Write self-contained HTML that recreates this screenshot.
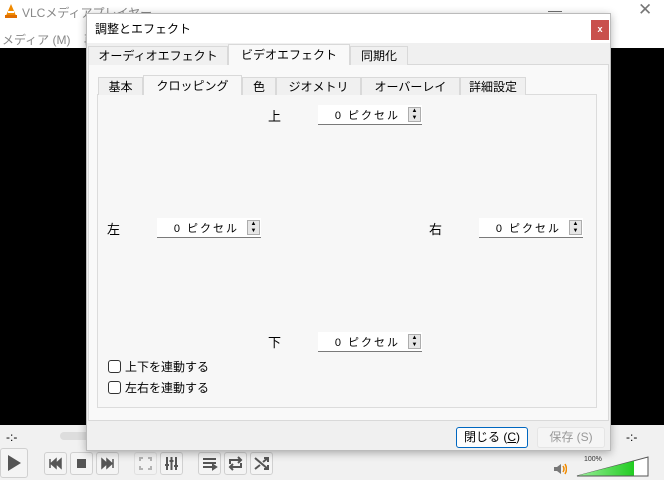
<!DOCTYPE html>
<html><head><meta charset="utf-8"><style>
*{margin:0;padding:0;box-sizing:border-box}
body{width:664px;height:480px;overflow:hidden;position:relative;background:#000;font-family:"Liberation Sans","Noto Sans CJK JP",sans-serif;font-size:12px;color:#000}
.a{position:absolute}
.tab{position:absolute;border:1px solid #d9d9d9;border-bottom:none;background:#f0f0f0;text-align:center;font-size:12px;line-height:18px}
.tab.on{background:#f9f9f9;z-index:2}
.spin{position:absolute;width:104px;height:20px;background:#fff;border-bottom:1px solid #7a7a7a}
.spin span{position:absolute;right:22px;top:2px;font-size:11px;letter-spacing:2px}
.spin i{position:absolute;right:1px;top:2px;width:13px;height:15px;border:1px solid #adadad;background:#e6e6e6;font-style:normal;font-size:6px;line-height:7px;text-align:center}
.btn{position:absolute;top:452px;width:23px;height:23px;border:1px solid #d0d0d0;border-radius:3px;background:#f4f4f4}
.cb{position:absolute;width:13px;height:13px;border:1px solid #333;border-radius:3px;background:#fff}
</style></head><body>
<div class="a" style="left:0;top:0;width:664px;height:48px;background:#fff"></div>
<svg class="a" style="left:3px;top:3px" width="16" height="16"><polygon points="8,1 14,15 2,15" fill="#f08a00"/><rect x="2" y="12" width="12" height="3" fill="#e06e00"/><rect x="5" y="8" width="6" height="2" fill="#fff"/></svg>
<div class="a" style="left:22px;top:4px;color:#888;font-size:12px">VLCメディアプレイヤー</div>
<div class="a" style="left:548px;top:2px;color:#666;font-size:14px">—</div>
<div class="a" style="left:638px;top:0px;color:#777;font-size:17px">✕</div>
<div class="a" style="left:2px;top:31px;color:#888;font-size:12px">メディア (M)&nbsp;&nbsp;&nbsp;&nbsp;再</div>
<div class="a" style="left:0;top:425px;width:664px;height:55px;background:#f1f1f1"></div>
<div class="a" style="left:6px;top:430px;font-size:12px">-:-</div>
<div class="a" style="left:626px;top:430px;font-size:12px">-:-</div>
<div class="a" style="left:60px;top:432px;width:30px;height:8px;background:#ddd;border-radius:4px"></div>
<div class="btn" style="left:0;top:448px;width:28px;height:30px"><svg width="26" height="28"><polygon points="7,6 20,14 7,22" fill="#555"/></svg></div>
<div class="btn" style="left:44px"><svg width="21" height="21"><path d="M5 6v9M16 6l-5 4.5 5 4.5zM11 6l-5 4.5 5 4.5z" fill="#555" stroke="#555" stroke-width="1.5"/></svg></div>
<div class="btn" style="left:70px"><svg width="21" height="21"><rect x="6" y="6" width="9" height="9" fill="#555"/></svg></div>
<div class="btn" style="left:96px"><svg width="21" height="21"><path d="M16 6v9M5 6l5 4.5-5 4.5zM10 6l5 4.5-5 4.5z" fill="#555" stroke="#555" stroke-width="1.5"/></svg></div>
<div class="btn" style="left:134px;opacity:.5"><svg width="21" height="21"><path d="M5 8V5h3M13 5h3v3M16 13v3h-3M8 16H5v-3" fill="none" stroke="#777" stroke-width="2"/></svg></div>
<div class="btn" style="left:160px"><svg width="21" height="21"><path d="M6 4v13M10.5 4v13M15 4v13M4 12h4M8.5 8h4M13 13h4" stroke="#555" stroke-width="2"/></svg></div>
<div class="btn" style="left:198px"><svg width="21" height="21"><path d="M4 6h13M4 10h13M4 14h9M14 12l3 2-3 2z" stroke="#555" stroke-width="2" fill="#555"/></svg></div>
<div class="btn" style="left:224px"><svg width="21" height="21"><path d="M5 11V7h10M13 4l3 3-3 3M16 10v4H6M8 17l-3-3 3-3" fill="none" stroke="#555" stroke-width="2"/></svg></div>
<div class="btn" style="left:250px"><svg width="21" height="21"><path d="M4 5l13 11M4 16l5-4M12 9l5-4M13 5h4v4M13 16h4v-4" fill="none" stroke="#555" stroke-width="2"/></svg></div>
<svg class="a" style="left:553px;top:463px" width="14" height="12"><path d="M1 4h3l4-3v10l-4-3H1z" fill="#777"/><path d="M10 3q2 3 0 6M12 1q3 5 0 10" stroke="#f08a00" stroke-width="1.5" fill="none"/></svg>
<div class="a" style="left:584px;top:456px;font-size:7px;color:#333">100%</div>
<svg class="a" style="left:575px;top:456px" width="80" height="22"><polygon points="2,20 73,1 73,20" fill="#fff" stroke="#555"/><defs><linearGradient id="g"><stop offset="0" stop-color="#9e9"/><stop offset="1" stop-color="#2c2"/></linearGradient></defs><polygon points="3,19.5 59,5 59,19.5" fill="url(#g)"/></svg>

<div class="a" style="left:86px;top:13px;width:525px;height:438px;background:#f0f0f0;border:1px solid #bbb;box-shadow:0 2px 8px rgba(0,0,0,.3)"></div>
<div class="a" style="left:87px;top:14px;width:523px;height:29px;background:#fff"></div>
<div class="a" style="left:95px;top:20px;font-size:12px">調整とエフェクト</div>
<div class="a" style="left:591px;top:20px;width:18px;height:20px;background:#c9504c;color:#fff;font-size:9px;text-align:center;line-height:19px;font-weight:bold">x</div>
<div class="a" style="left:88px;top:64px;width:521px;height:357px;background:#f9f9f9;border:1px solid #d9d9d9"></div>
<div class="tab" style="left:88px;top:46px;width:140px;height:19px">オーディオエフェクト</div>
<div class="tab on" style="left:228px;top:44px;width:122px;height:21px;line-height:20px">ビデオエフェクト</div>
<div class="tab" style="left:350px;top:46px;width:58px;height:19px">同期化</div>
<div class="a" style="left:97px;top:94px;width:500px;height:314px;background:#f7f7f7;border:1px solid #dcdcdc"></div>
<div class="tab" style="left:98px;top:77px;width:45px;height:18px">基本</div>
<div class="tab on" style="left:143px;top:75px;width:99px;height:20px;background:#f7f7f7;line-height:20px">クロッピング</div>
<div class="tab" style="left:242px;top:77px;width:34px;height:18px">色</div>
<div class="tab" style="left:276px;top:77px;width:85px;height:18px">ジオメトリ</div>
<div class="tab" style="left:361px;top:77px;width:99px;height:18px">オーバーレイ</div>
<div class="tab" style="left:460px;top:77px;width:66px;height:18px">詳細設定</div>

<div class="a" style="left:268px;top:106px;font-size:13px">上</div>
<div class="spin" style="left:318px;top:105px"><span>0 ピクセル</span><i>▲<br>▼</i></div>
<div class="a" style="left:107px;top:219px;font-size:13px">左</div>
<div class="spin" style="left:157px;top:218px"><span>0 ピクセル</span><i>▲<br>▼</i></div>
<div class="a" style="left:429px;top:219px;font-size:13px">右</div>
<div class="spin" style="left:479px;top:218px"><span>0 ピクセル</span><i>▲<br>▼</i></div>
<div class="a" style="left:268px;top:332px;font-size:13px">下</div>
<div class="spin" style="left:318px;top:332px"><span>0 ピクセル</span><i>▲<br>▼</i></div>
<div class="cb" style="left:108px;top:360px"></div>
<div class="a" style="left:125px;top:358px;font-size:12px">上下を連動する</div>
<div class="cb" style="left:108px;top:381px"></div>
<div class="a" style="left:125px;top:379px;font-size:12px">左右を連動する</div>

<div class="a" style="left:456px;top:427px;width:72px;height:21px;border:1px solid #0067c0;border-radius:3px;background:#fdfdfd;text-align:center;line-height:19px;font-size:12px">閉じる (<u>C</u>)</div>
<div class="a" style="left:537px;top:427px;width:68px;height:21px;border:1px solid #e5e5e5;border-radius:3px;background:#f5f5f5;text-align:center;line-height:19px;font-size:12px;color:#999">保存 (S)</div>
</body></html>
